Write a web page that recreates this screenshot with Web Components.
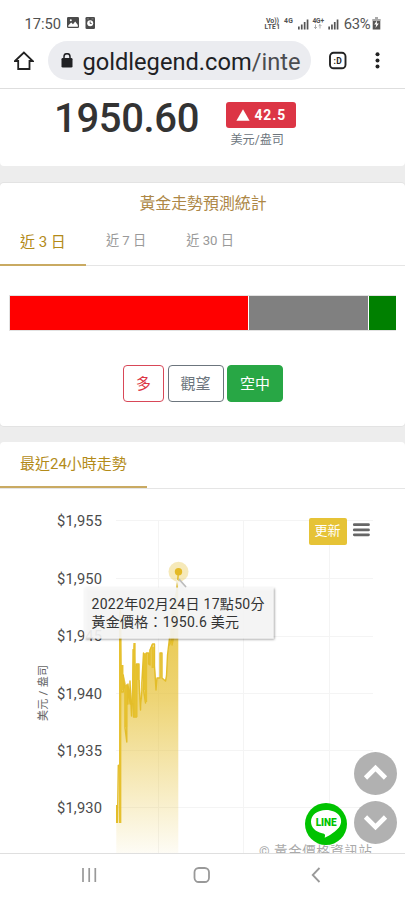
<!DOCTYPE html>
<html lang="zh-Hant">
<head>
<meta charset="utf-8">
<title>黃金價格資訊站</title>
<style>
html,body{margin:0;height:900px;overflow:hidden;background:#fff}
body{font-family:Roboto,"Noto Sans CJK TC",sans-serif;color:#333}
</style>
</head>
<body>
<phone-screen>
  <status-bar slot="top" time="17:50" battery="63%"></status-bar>
  <address-bar slot="top" host="goldlegend.com" path="/inte"></address-bar>
  <price-card price="1950.60" change="42.5" unit="美元/盎司"></price-card>
  <forecast-card heading="黃金走勢預測統計">
    <tab-item slot="tabs" active>近 3 日</tab-item>
    <tab-item slot="tabs">近 7 日</tab-item>
    <tab-item slot="tabs">近 30 日</tab-item>
    <vote-button kind="danger">多</vote-button>
    <vote-button kind="plain">觀望</vote-button>
    <vote-button kind="success">空中</vote-button>
  </forecast-card>
  <trend-card><tab-item slot="tabs" active>最近24小時走勢</tab-item><price-chart></price-chart></trend-card>
  <floating-actions slot="overlay"></floating-actions>
  <nav-bar slot="bottom"></nav-bar>
</phone-screen>
<script>
const define = (name, html) => customElements.define(name, class extends HTMLElement {
  constructor() {
    super();
    this.attachShadow({mode: 'open'}).innerHTML =
      '<style>:host,*{box-sizing:border-box}svg{display:block}</style>' +
      html.replace(/\{\{(\w+)\}\}/g, (_, key) => this.getAttribute(key) || '');
  }
});

define('phone-screen', `
<style>
:host{display:flex;flex-direction:column;position:relative;width:405px;height:900px;overflow:hidden;background:#fff}
main{flex:1;min-height:0;overflow:hidden;display:flex;flex-direction:column;gap:17px;background:#ededed;border-top:1px solid #dedede}
</style>
<slot name="top"></slot><main><slot></slot></main><slot name="bottom"></slot><slot name="overlay"></slot>`);

define('status-bar', `
<style>
:host{display:flex;height:40px;padding:7px 23px 0 24.5px;align-items:center;color:#505050;flex:none;font-size:14.7px;line-height:32px}
.time{width:42px}
.right{margin-left:auto}
</style>
<span class="time">{{time}}</span>
<svg width="30" height="14" viewBox="0 0 30 14">
 <rect x="0" y="0" width="12" height="11" rx="1.3" fill="#4b4b4b"/><path d="M1.3 8.5 4.2 5.6 6 7.2 8.2 4.6 10.8 8V9.8H1.3Z" fill="#fff"/><circle cx="3.8" cy="3.2" r="1" fill="#fff"/>
 <rect x="18.5" y="0" width="9.500" height="12" rx="1.3" fill="#4b4b4b"/><circle cx="23.2" cy="6.200" r="3" fill="#fff"/><path d="M23.2 4.500v2h1.5" stroke="#4b4b4b" fill="none" stroke-width=".9"/><path d="M20 1.9h2M24.500 1.9h2" stroke="#999" stroke-width=".7"/>
</svg>
<svg class="right" width="119" height="20" viewBox="263 13.5 119 20" font-family="Roboto">
 <g fill="#505050" font-weight="700"><text x="266" y="22" font-size="7" textLength="13">Vo))</text><text x="264.5" y="28.8" font-size="6.7" textLength="15.5">LTE1</text><text x="284" y="22.5" font-size="6.8" textLength="9">4G</text><text x="312.5" y="22.5" font-size="6.6" textLength="11.5">4G+</text></g>
 <path d="M315.5 24v4m-1.4-1.4 1.4 1.4 1.4-1.4M320 28v-4m-1.4 1.4 1.4-1.4 1.4 1.4" fill="none" stroke="#888" stroke-width=".7"/>
 <path d="M298 26h1.7v3H298Zm2.9-2h1.7v5h-1.7Zm2.9-2.4h1.7V29h-1.7ZM306.7 19h1.7v10h-1.7ZM328.3 26h1.7v3h-1.7Zm2.8-2h1.7v5h-1.7Zm2.8-2.4h1.7V29h-1.7ZM336.7 19h1.7v10h-1.7Z" fill="#555"/>
 <text x="343.7" y="28.8" font-size="14.8" fill="#555" textLength="27">{{battery}}</text>
 <path d="M375 17h3v1.5h2.3V29h-7.6V18.500H375Z" fill="#555"/><path d="M375 17h3v1.5h2.300v2h-7.600v-2H375Z" fill="#aaa"/><path d="m377.2 19.8-3 4.300h2l-.7 3.300 3.300-4.400h-2Z" fill="#fff"/>
</svg>`);

define('address-bar', `
<style>
:host{display:flex;flex:none;height:48px;padding:1px 23px 0 14px;background:#fff}
.home{margin:10px 13.500px 0 0}
.pill{display:flex;width:263px;height:39px;border-radius:20px;background:#ebecf0;padding-left:13.500px;color:#202124;font-size:23.650px;line-height:42px;white-space:nowrap}
.pill svg{margin:12px 9.500px 0 0}
.pill i{font-style:normal;color:#4b4d51}
.tabs{margin:9.500px 0 0 17.500px}
.more{margin:10px 0 0 auto}
</style>
<svg class="home" width="20" height="20" viewBox="14 51 20 20"><path d="M15 61 23.900 52.500 32.800 61H29.500V69H18.200V61Z" fill="none" stroke="#222" stroke-width="1.800"/></svg>
<div class="pill"><svg width="12" height="16" viewBox="0 0 12 16"><path d="M3 6V3.700a3 3 0 0 1 6 0V6" fill="none" stroke="#202124" stroke-width="1.500"/><rect x=".5" y="5" width="11" height="9.500" rx="1.300" fill="#202124"/></svg><span>{{host}}<i>{{path}}</i></span></div>
<svg class="tabs" width="20" height="20" viewBox="0 0 20 20"><rect x="2" y="1.800" width="15.500" height="15.500" rx="3.600" fill="none" stroke="#222" stroke-width="1.900"/><text x="5.400" y="12.600" font-family="Roboto" font-size="8.500" font-weight="700" fill="#222" textLength="8.500">:D</text></svg>
<svg class="more" width="9" height="20" viewBox="0 0 9 20"><g fill="#222"><circle cx="4.500" cy="3.300" r="2"/><circle cx="4.500" cy="9.500" r="2"/><circle cx="4.500" cy="15.600" r="2"/></g></svg>`);

define('price-card', `
<style>
:host{display:flex;flex:none;height:77px;background:#fff;border-radius:0 0 4px 4px;padding-left:54px}
.price{width:172px;font-size:40px;font-weight:500;line-height:49px;letter-spacing:-.35px;margin-top:5px}
.side{margin-top:13px}
.badge{display:flex;align-items:center;gap:4.500px;width:70px;height:26px;border-radius:3px;background:#dc3545;color:#fff;font-weight:700;font-size:13.900px;letter-spacing:.9px;padding:0 0 0 10px}
.unit{font-size:12.100px;line-height:18px;color:#6c757d;margin:3px 0 0 4.500px}
</style>
<div class="price">{{price}}</div>
<div class="side"><div class="badge"><svg width="14" height="12" viewBox="0 0 14 12"><path d="M7 .2 13.600 11.700H.4Z" fill="#fff"/></svg><span>{{change}}</span></div><div class="unit">{{unit}}</div></div>`);

define('tab-item', `
<style>
:host{display:block;height:var(--tab-height,45px);padding:var(--tab-top,9px) 20px 0;font-size:13.200px;line-height:22px;color:#999;white-space:nowrap}
:host([active]){font-size:15px;line-height:24px;color:#b38b19;border-bottom:2px solid #c9aa62}
</style><slot></slot>`);

define('vote-button', `
<style>
:host{display:flex;align-items:center;justify-content:center;width:56px;height:37px;border:1px solid #6c757d;border-radius:4px;font-size:14.900px;line-height:22px;color:#6c757d}
:host([kind=danger]){width:41px;border-color:#d84858;color:#dc3545}
:host([kind=success]){border-color:#28a745;background:#28a745;color:#fff}
</style><slot></slot>`);

define('forecast-card', `
<style>
:host{display:block;flex:none;height:243px;background:#fff;border-radius:4px;box-shadow:0 0 0 1px #e3e3e3}
h2{margin:0;padding:9px 0 0 1px;height:38px;text-align:center;font-size:15.900px;line-height:24px;font-weight:400;color:#ad8746}
.tabs{display:flex;height:45px;border-bottom:1px solid #e5e5e5}
.bar{display:grid;grid-template-columns:238px 119px 27px;gap:1px;height:36px;margin:29px 9px 0 9px;border:1px solid #e2e2e2;border-right:0}
.bar i:nth-child(1){background:#f00}.bar i:nth-child(2){background:gray}.bar i:nth-child(3){background:green}
.buttons{display:flex;justify-content:center;gap:3.500px;padding:34px 0 0 1px}
</style>
<h2>{{heading}}</h2><div class="tabs"><slot name="tabs"></slot></div><div class="bar"><i></i><i></i><i></i></div><div class="buttons"><slot></slot></div>`);

define('trend-card', `
<style>
:host{display:block;flex:none;margin-top:-1px;background:#fff;border-radius:4px 4px 0 0;--tab-height:46px;--tab-top:10px}
.tabs{display:flex;height:47px;border-bottom:1px solid #e5e5e5}
</style>
<div class="tabs"><slot name="tabs"></slot></div><slot></slot>`);

define('price-chart', `
<style>:host{display:block;height:364px;overflow:hidden}text{font-family:Roboto,"Noto Sans CJK TC",sans-serif}</style>
<svg width="405" height="364" viewBox="0 489 405 364">
 <defs>
  <linearGradient id="gold" gradientUnits="userSpaceOnUse" x1="0" y1="571" x2="0" y2="858"><stop stop-color="#e6c136"/><stop offset=".45" stop-color="#e6c136" stop-opacity=".68"/><stop offset="1" stop-color="#e6c136" stop-opacity="0.03"/></linearGradient>
  <filter id="soft" x="-10%" y="-20%" width="125%" height="150%"><feDropShadow dx="1" dy="1" stdDeviation="1.200" flood-opacity=".45"/></filter>
 </defs>
 <path d="M116 520.500H373M116 578.500H373M116 636.500H373M116 693.500H373M116 750.500H373M116 807.500H373M158.500 520V853M243.500 520V853M329.500 520V853" stroke="#f4f4f4" fill="none"/>
 <g font-size="14.700" fill="#4b4b4b"><text x="57" y="526" textLength="45">$1,955</text><text x="57" y="583.500" textLength="45">$1,950</text><text x="57" y="641" textLength="45">$1,945</text><text x="57" y="698.500" textLength="45">$1,940</text><text x="57" y="755.500" textLength="45">$1,935</text><text x="57" y="813" textLength="45">$1,930</text></g>
 <text transform="translate(47 721) rotate(-90)" font-size="11" fill="#666" textLength="56">美元 / 盎司</text>
 <path d="M116.300 858V805H118V764H119.400V618L120.500 652 121.500 692 123.500 675 126 684 127 685 129 700 130 680 131.500 700 133.500 644 134.500 648 135.500 664H139V680H140L141 709 142.500 685 143.500 653H148V664L149.500 650 152 644H153.500L154.500 664 156 680 157 678H160V653H162V678L165.500 681 166.500 676 167.500 655 169.500 640 171 615 174 600 176 590 178.300 573V858Z" fill="url(#gold)"/>
 <path d="M116.700 823V805M117.500 823 118.300 765M120.200 823V610L120.800 652 121.300 692 123.300 692V675L125 690V728L126.800 742V685L128 704V684L130 704V681L131.500 716 132.300 700 133.500 650V717H136.500V664H139V681L140.500 710 141.800 691V683L143.500 653V690L145.500 703 146.300 653 148.500 653V664L150 665V650L152.500 644 154.500 644V666L156 690 157 678H160V653H162V678L165.500 681 166.500 676 167.500 655 169.500 638V645L171.500 640 172 620V645L173.500 638 175 615 178.300 573" fill="none" stroke="#e3bd29" stroke-width="1.400" stroke-linejoin="round"/>
 <path d="M120.200 823V612M122.300 690V665M126 727V685M134.500 717V643M144.500 690V654M146 702V655M152.700 668V647" stroke="#e6c12e" stroke-width="2.300" fill="none"/>
 <path d="M133.500 649V703M136.300 717V666M138 680V665" stroke="#e6c12e" stroke-width="2.200" fill="none"/>
 <circle cx="178.500" cy="571.800" r="10" fill="#e6c136" fill-opacity=".35"/><circle cx="178.500" cy="571.800" r="3.700" fill="#e4b925"/>
 <path d="M84.500 587.500H178L176.500 579 185.500 587.500H273.500V638.500H84.500Z" fill="#f9f9f9" fill-opacity=".87" filter="url(#soft)"/>
 <path d="m179 579 7 8" stroke="#bbb" stroke-width="1.500"/>
 <g font-size="14" fill="#333"><text x="91.500" y="609.300" textLength="173">2022年02月24日 17點50分</text><text x="91.500" y="626.800" textLength="147.500">黃金價格：1950.6 美元</text></g>
 <rect x="309" y="518" width="38" height="27" rx="2" fill="#e6c336"/><text x="314.500" y="535.300" font-size="13" fill="#fff" textLength="26">更新</text>
 <path d="M354.300 524.700H368.500M354.300 529.900H368.500M354.300 534.800H368.500" stroke="#666" stroke-width="2.800" stroke-linecap="round"/>
 <text x="259" y="856" font-size="13.500" fill="#aaa" textLength="113">© 黃金價格資訊站</text>
</svg>`);

define('floating-actions', `
<style>
:host{position:absolute;left:305px;top:752px;display:flex;align-items:flex-end;gap:7px}
.arrows{display:flex;flex-direction:column;gap:6px}
.line{margin-bottom:-1px}
</style>
<svg class="line" width="42" height="42" viewBox="0 0 42 42"><circle cx="21" cy="21" r="21" fill="#00c300"/><path d="M21 7C12.500 7 6 12 6 18.800 6 24.500 10.500 28.800 17 30.200 20.500 30.900 20.300 31.500 19.700 34.800 25 32.500 31 28 34 24.500 40 16 33 7 21 7Z" fill="#fff"/><text x="10.700" y="22.500" font-family="Roboto" font-size="10" font-weight="900" fill="#00c300" textLength="21">LINE</text></svg>
<div class="arrows"><svg width="43" height="43" viewBox="0 0 43 43"><circle cx="21.500" cy="21.500" r="21.500" fill="#b1b1b1"/><path d="M11.500 26 21.500 16 31.500 26" fill="none" stroke="#fff" stroke-width="4.600"/></svg><svg width="43" height="43" viewBox="0 0 43 43"><circle cx="21.500" cy="21.500" r="21.500" fill="#b1b1b1"/><path d="M11.500 16 21.500 26 31.500 16" fill="none" stroke="#fff" stroke-width="4.600"/></svg></div>`);

define('nav-bar', `
<style>:host{display:flex;flex:none;height:47px;border-top:1px solid #dfdfdf;background:#fff;align-items:center;justify-content:space-between;padding:0 80px 4px 79.500px}</style>
<svg width="18" height="18" viewBox="0 0 18 18"><path d="M3 2V16M9.200 2V16M15.300 2V16" stroke="#999" stroke-width="1.700"/></svg>
<svg width="18" height="18" viewBox="0 0 18 18"><rect x="1.500" y="2" width="14.500" height="14" rx="4.300" fill="none" stroke="#999" stroke-width="1.800"/></svg>
<svg width="18" height="18" viewBox="0 0 18 18"><path d="M12.500 2 5.700 9 12.500 16" fill="none" stroke="#999" stroke-width="1.800"/></svg>`);
</script>
</body>
</html>
